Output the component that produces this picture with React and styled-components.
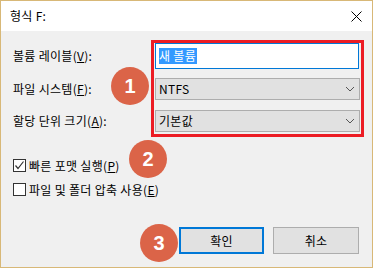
import styled, { createGlobalStyle } from "styled-components"

const GlobalStyle = createGlobalStyle`
  html, body {
    margin: 0;
    padding: 0;
    background: #f0f0f0;
  }
  * {
    box-sizing: border-box;
  }
`

const uiFont = `"Noto Sans CJK KR", "Noto Sans", sans-serif`

const Window = styled.div`
  position: relative;
  width: 373px;
  height: 268px;
  border: 1px solid #d8b877;
  display: flex;
  flex-direction: column;
  font-family: ${uiFont};
  font-size: 12px;
  letter-spacing: 0.3px;
  color: #000;
  overflow: hidden;
`

const TitleBar = styled.div`
  height: 30px;
  flex-shrink: 0;
  background: #fff;
  display: flex;
  align-items: center;
  justify-content: space-between;
  padding: 0 10px 0 9px;
`

const Title = styled.span`
  line-height: 14px;
`

const CloseButton = styled.div`
  width: 12px;
  height: 12px;
  display: flex;
  align-items: center;
  justify-content: center;
  margin-top: 1px;
`

const Body = styled.div`
  flex: 1;
  background: #f0f0f0;
  padding: 9px 8px 13px 12px;
  display: flex;
  flex-direction: column;
`

const Form = styled.div`
  display: flex;
`

const LabelColumn = styled.div`
  width: 138px;
  padding-top: 3px;
  display: flex;
  flex-direction: column;
`

const Label = styled.div`
  height: ${p => p.$h}px;
  margin-top: ${p => p.$gap || 0}px;
  display: flex;
  align-items: center;
  line-height: 14px;
  white-space: nowrap;
`

const FieldBox = styled.div`
  width: 213px;
  border: 3px solid #ec1c24;
  padding: 0 2px 2px 1px;
  display: flex;
  flex-direction: column;
`

const TextInput = styled.div`
  width: 204px;
  height: 26px;
  border: 1px solid #0078d7;
  background: #fff;
  display: flex;
  align-items: center;
  padding-left: 3px;
`

const Selection = styled.span`
  background: #3399ff;
  color: #fff;
  line-height: 16px;
  padding-right: 1px;
`

const Combo = styled.div`
  width: 205px;
  height: 22px;
  margin-top: ${p => p.$gap}px;
  border: 1px solid #adadad;
  background: #e1e1e1;
  display: flex;
  align-items: center;
  justify-content: space-between;
  padding: 0 4px 0 3px;
  line-height: 14px;
`

const CheckRow = styled.div`
  display: flex;
  align-items: center;
  height: 13px;
  margin-top: ${p => p.$gap}px;
  gap: 3px;
`

const CheckText = styled.span`
  line-height: 14px;
  white-space: nowrap;
`

const Box = styled.div`
  width: 13px;
  height: 13px;
  border: 1px solid #333;
  background: #fff;
  display: flex;
  align-items: center;
  justify-content: center;
`

const ButtonRow = styled.div`
  display: flex;
  justify-content: flex-end;
  gap: 9px;
  margin-top: 31px;
  padding-right: 5px;
`

const Button = styled.div`
  width: ${p => (p.$primary ? 85 : 86)}px;
  height: 27px;
  background: #e1e1e1;
  border: ${p => (p.$primary ? "2px solid #0078d7" : "1px solid #adadad")};
  display: flex;
  align-items: center;
  justify-content: center;
  line-height: 14px;
`

const Marker = styled.div`
  position: absolute;
  left: ${p => p.$x}px;
  top: ${p => p.$y}px;
  width: 38px;
  height: 38px;
  border-radius: 50%;
  background: #db6448;
  color: #fff;
  display: flex;
  align-items: center;
  justify-content: center;
  font-family: "Liberation Sans", Arial, sans-serif;
  font-weight: 700;
  font-size: 20px;
  letter-spacing: 0;
`

const Chevron = () => (
  <svg width="10" height="6" viewBox="0 0 10 6">
    <polyline points="1,1 5,5 9,1" fill="none" stroke="#555" strokeWidth="1" />
  </svg>
)

const Check = () => (
  <svg width="11" height="11" viewBox="0 0 11 11">
    <polyline points="1.5,5.5 4,8.5 9.5,1.5" fill="none" stroke="#333" strokeWidth="1.2" />
  </svg>
)

const App = () => {
  return (
    <>
      <GlobalStyle />
      <Window>
        <TitleBar>
          <Title>형식 F:</Title>
          <CloseButton>
            <svg width="11" height="11" viewBox="0 0 11 11">
              <path d="M0.5 0.5 L10.5 10.5 M10.5 0.5 L0.5 10.5" stroke="#000" strokeWidth="1" />
            </svg>
          </CloseButton>
        </TitleBar>
        <Body>
          <Form>
            <LabelColumn>
              <Label $h={26}>볼륨 레이블(<u>V</u>):</Label>
              <Label $h={22} $gap={9}>파일 시스템(<u>F</u>):</Label>
              <Label $h={22} $gap={10}>할당 단위 크기(<u>A</u>):</Label>
            </LabelColumn>
            <FieldBox>
              <TextInput>
                <Selection>새 볼륨</Selection>
              </TextInput>
              <Combo $gap={9}>
                NTFS
                <Chevron />
              </Combo>
              <Combo $gap={10}>
                기본값
                <Chevron />
              </Combo>
            </FieldBox>
          </Form>
          <CheckRow $gap={22}>
            <Box><Check /></Box>
            <CheckText>빠른 포맷 실행(<u>P</u>)</CheckText>
          </CheckRow>
          <CheckRow $gap={11}>
            <Box />
            <CheckText>파일 및 폴더 압축 사용(<u>E</u>)</CheckText>
          </CheckRow>
          <ButtonRow>
            <Button $primary>확인</Button>
            <Button>취소</Button>
          </ButtonRow>
        </Body>
        <Marker $x={110} $y={66}>1</Marker>
        <Marker $x={128} $y={139}>2</Marker>
        <Marker $x={139} $y={223}>3</Marker>
      </Window>
    </>
  )
}

export default App
